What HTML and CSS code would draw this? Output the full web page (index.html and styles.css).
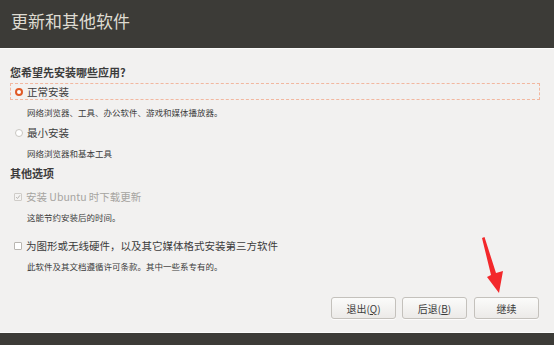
FILE: index.html
```html
<!DOCTYPE html>
<html lang="zh-CN">
<head>
<meta charset="utf-8">
<title>更新和其他软件</title>
<link rel="stylesheet" href="styles.css">
</head>
<body>
<div class="page">
  <header class="header"><h1 class="title">更新和其他软件</h1></header>
  <main class="content">
    <h2 class="heading">您希望先安装哪些应用?</h2>
    <div class="row row-focus">
      <span class="radio radio-on"></span><span class="label">正常安装</span>
    </div>
    <p class="desc">网络浏览器、工具、办公软件、游戏和媒体播放器。</p>
    <div class="row row-gap">
      <span class="radio"></span><span class="label">最小安装</span>
    </div>
    <p class="desc">网络浏览器和基本工具</p>
    <h2 class="heading heading-2">其他选项</h2>
    <div class="row row-gap2 disabled">
      <span class="check check-on"><svg viewBox="0 0 8 8" width="8" height="8"><path d="M1.5 4.2 L3.3 6 L6.6 1.8" fill="none" stroke="#b4b2ae" stroke-width="1.3"/></svg></span><span class="label">安装 Ubuntu 时下载更新</span>
    </div>
    <p class="desc">这能节约安装后的时间。</p>
    <div class="row row-gap3">
      <span class="check"></span><span class="label">为图形或无线硬件，以及其它媒体格式安装第三方软件</span>
    </div>
    <p class="desc">此软件及其文档遵循许可条款。其中一些系专有的。</p>
  </main>
  <div class="buttons">
    <button class="btn">退出(<u>Q</u>)</button>
    <button class="btn">后退(<u>B</u>)</button>
    <button class="btn btn-last">继续</button>
  </div>
  <footer class="bottom"></footer>
  <svg class="arrow" width="554" height="345" viewBox="0 0 554 345">
    <polygon points="482,238 484.5,237 496,273 503,271 499,293 487,277 491,275" fill="#f3282b"/>
  </svg>
</div>
</body>
</html>
```
FILE: styles.css
```css
* { box-sizing: border-box; }
html, body { margin: 0; padding: 0; }
body {
  font-family: "Noto Sans CJK SC", "Noto Sans", sans-serif;
  background: #f2f1f0;
  color: #3c3c3c;
}
.page {
  position: relative;
  width: 554px;
  height: 345px;
  display: flex;
  flex-direction: column;
  overflow: hidden;
}
.header {
  height: 49px;
  background: #3c3b37;
  border-bottom: 1px solid #fbfbfa;
  padding: 12px 0 0 11px;
}
.title {
  margin: 0;
  font-size: 17px;
  line-height: 18px;
  font-weight: normal;
  color: #dfdbd2;
}
.content {
  flex: 1;
  padding: 0 14px 0 10px;
}
.heading {
  margin: 16px 0 0 0;
  font-size: 11px;
  line-height: 14px;
  font-weight: bold;
  color: #3c3c3c;
}
.heading-2 { margin-top: 7px; }
.row {
  height: 17px;
  border: 1px solid transparent;
  display: flex;
  align-items: center;
  padding-left: 3px;
  font-size: 10.5px;
}
.row-focus {
  margin-top: 4px;
  border: 1px dashed #f2b79f;
}
.row-gap { margin-top: 6px; }
.row-gap2 { margin-top: 8px; }
.row-gap3 { margin-top: 14px; }
.label { margin-left: 4px; line-height: 14px; }
.disabled .label { color: #a6a4a0; }
.radio {
  width: 8px;
  height: 8px;
  border-radius: 50%;
  border: 1px solid #c9c6c1;
  background: #fff;
  flex: none;
  margin-left: 1px;
}
.radio-on {
  border: 2px solid #e05a26;
  background: #fff;
}
.check {
  width: 8px;
  height: 8px;
  border: 1px solid #b9b6b1;
  border-radius: 1px;
  background: #fff;
  flex: none;
  display: flex;
  align-items: center;
  justify-content: center;
}
.check-on { border-color: #cfccc8; background: #f4f3f2; }
.check-on svg { display: block; }
.desc {
  margin: 6px 0 0 17px;
  font-size: 8.5px;
  line-height: 12px;
  color: #3c3c3c;
}
.buttons {
  display: flex;
  justify-content: flex-end;
  gap: 6px;
  padding: 0 15px 13px 0;
}
.btn {
  width: 65px;
  height: 22px;
  border: 1px solid #c4c1bc;
  border-radius: 3px;
  background: linear-gradient(#fbfbfa, #eceae8);
  font-family: "Noto Sans CJK SC", "Noto Sans", sans-serif;
  font-size: 10px;
  color: #3c3c3c;
  padding: 0;
  box-shadow: 0 1px 0 rgba(255,255,255,0.8);
}
.btn-last { margin-left: 1px; }
.bottom {
  height: 13px;
  border-top: 1px solid #fbfbfa;
  background: #3c3b37;
}
.arrow {
  position: absolute;
  left: 0;
  top: 0;
  pointer-events: none;
}
```
